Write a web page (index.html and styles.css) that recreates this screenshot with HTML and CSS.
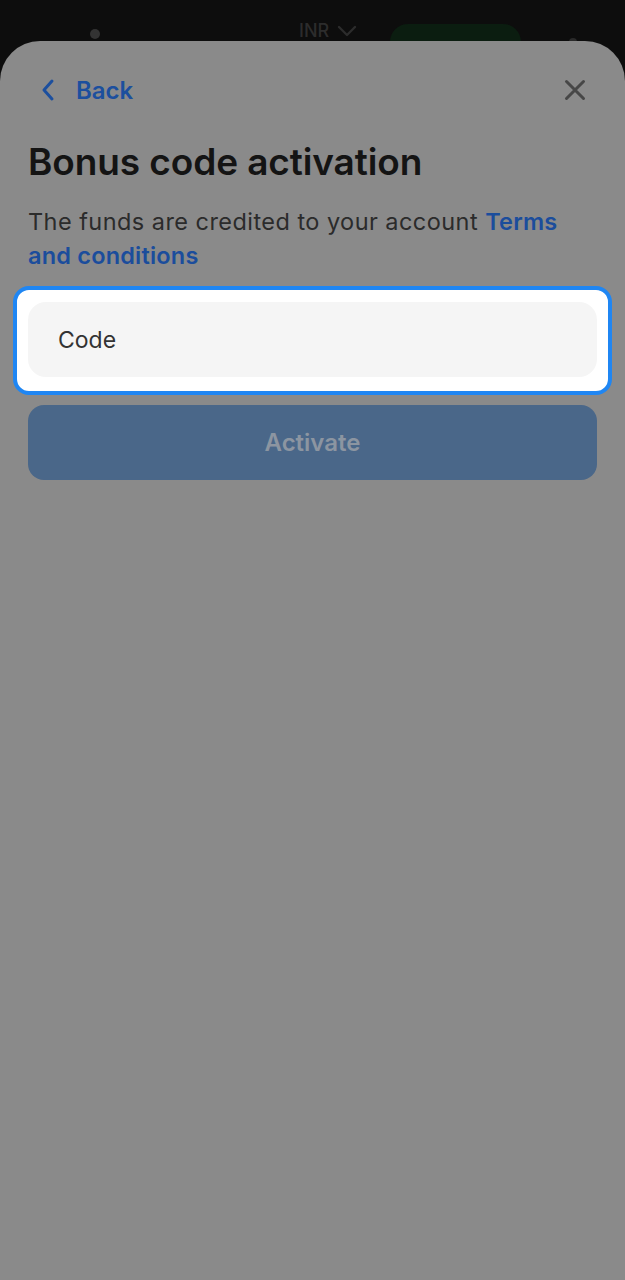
FILE: index.html
```html
<!DOCTYPE html>
<html lang="en">
<head>
<meta charset="utf-8">
<title>Bonus code activation</title>
<link rel="stylesheet" href="styles.css">
</head>
<body>
<div class="topbar">
  <span class="dot"></span>
  <span class="currency">INR
    <svg class="cur-chev" viewBox="0 0 20 12" width="20" height="12"><path d="M2 2 L10 10 L18 2" fill="none" stroke="#2c2c2c" stroke-width="2.4" stroke-linecap="round" stroke-linejoin="round"/></svg>
  </span>
  <span class="pill"></span>
  <span class="dot small"></span>
</div>
<main class="sheet">
  <header class="sheet-head">
    <a class="back" href="#">
      <svg class="back-chev" viewBox="0 0 16 24" width="16" height="24"><path d="M12 3 L4 12 L12 21" fill="none" stroke="#1c4f9e" stroke-width="3" stroke-linecap="round" stroke-linejoin="round"/></svg>
      <span>Back</span>
    </a>
    <button class="close" aria-label="Close">
      <svg viewBox="0 0 24 24" width="24" height="24"><path d="M3.5 3.5 L20.5 20.5 M20.5 3.5 L3.5 20.5" fill="none" stroke="#474747" stroke-width="3" stroke-linecap="round"/></svg>
    </button>
  </header>
  <h1 class="title">Bonus code activation</h1>
  <p class="desc">The funds are credited to your account <a class="link" href="#">Terms and conditions</a></p>
  <div class="spot">
    <div class="field">Code</div>
  </div>
  <button class="activate">Activate</button>
</main>
</body>
</html>
```
FILE: styles.css
```css
html, body {
  margin: 0;
  padding: 0;
}
body {
  background: #0d0d0d;
  font-family: Inter, "Noto Sans", "Liberation Sans", sans-serif;
  width: 625px;
  min-height: 1280px;
  display: flex;
  flex-direction: column;
}
.topbar {
  height: 41px;
  overflow: hidden;
  display: flex;
  align-items: flex-start;
  padding-top: 24px;
  box-sizing: border-box;
}
.dot {
  width: 10px;
  height: 10px;
  border-radius: 50%;
  background: #333;
  margin: 5px 0 0 90px;
}
.dot.small {
  width: 8px;
  height: 8px;
  margin: 14px 0 0 48px;
  background: #2a2a2a;
}
.currency {
  margin-left: 199px;
  color: #2c2c2c;
  font-size: 18px;
  font-weight: 500;
  line-height: 14px;
  display: flex;
  align-items: center;
  gap: 8px;
}
.pill {
  width: 131px;
  height: 40px;
  border-radius: 18px;
  background: #0b1d10;
  margin-left: 33px;
}
.sheet {
  flex: 1;
  background: #8a8a8a;
  border-radius: 40px 40px 0 0;
  padding: 25px 28px 0;
}
.sheet-head {
  height: 48px;
  display: flex;
  align-items: center;
  justify-content: space-between;
}
.back {
  display: flex;
  align-items: center;
  gap: 20px;
  margin-left: 12px;
  color: #1c4f9e;
  text-decoration: none;
  font-size: 24px;
  font-weight: 600;
}
.close {
  background: none;
  border: 0;
  padding: 0;
  margin-right: 10px;
  display: flex;
}
.title {
  margin: 26px 0 0;
  font-size: 37px;
  line-height: 44px;
  font-weight: 600;
  color: #141414;
  letter-spacing: -0.1px;
}
.desc {
  margin: 21px 0 0;
  font-size: 23.5px;
  line-height: 34px;
  letter-spacing: 0.45px;
  color: #2b2b2b;
}
.link {
  color: #1b4d9c;
  font-weight: 600;
  letter-spacing: 0.2px;
  text-decoration: none;
}
.spot {
  margin: 13px -15px 0;
  background: #fff;
  border: 4px solid #1f86f3;
  border-radius: 16px;
  padding: 12px 11px 14px;
}
.field {
  height: 75px;
  background: #f5f5f5;
  border-radius: 18px;
  display: flex;
  align-items: center;
  padding-left: 30px;
  font-size: 23px;
  color: #333;
}
.activate {
  display: block;
  width: 100%;
  height: 75px;
  margin-top: 10px;
  border: 0;
  border-radius: 16px;
  background: #4a6789;
  color: #8c95a1;
  font-family: inherit;
  font-size: 24px;
  font-weight: 600;
}
```
